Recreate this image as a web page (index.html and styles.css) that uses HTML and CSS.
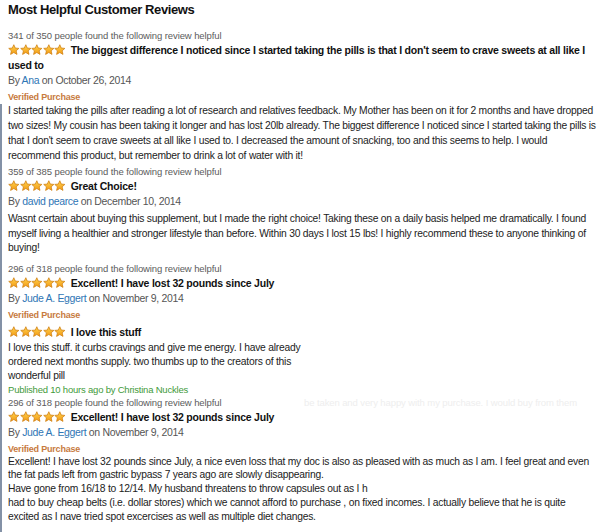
FILE: index.html
```html
<!DOCTYPE html>
<html lang="en">
<head>
    <meta charset="UTF-8">
    <title>Most Helpful Customer Reviews</title>
    <link rel="stylesheet" href="styles.css">
</head>
<body>
    <svg width="0" height="0" class="defs">
        <defs>
            <linearGradient id="starFill" x1="0" y1="0" x2="0" y2="1">
                <stop offset="0" stop-color="#ffd452"/>
                <stop offset="1" stop-color="#f39a12"/>
            </linearGradient>
            <symbol id="star" viewBox="0 0 24 24">
                <path d="M12 1.5l3.1 6.9 7.4.7-5.6 5 1.7 7.4L12 17.6l-6.6 3.9 1.7-7.4-5.6-5 7.4-.7z" fill="url(#starFill)" stroke="#cf7f12" stroke-width="1.6" stroke-linejoin="round"/>
            </symbol>
        </defs>
    </svg>

    <div class="reviews">
        <h2 class="heading">Most Helpful Customer Reviews</h2>

        <div class="review">
            <div class="helpful">341 of 350 people found the following review helpful</div>
            <div class="title">
                <span class="stars"><svg><use href="#star"/></svg><svg><use href="#star"/></svg><svg><use href="#star"/></svg><svg><use href="#star"/></svg><svg><use href="#star"/></svg></span>
                The biggest difference I noticed since I started taking the pills is that I don't seem to crave sweets at all like I used to
            </div>
            <div class="byline">By <a href="#">Ana</a> on October 26, 2014</div>
            <div class="verified">Verified Purchase</div>
            <p class="body first">I started taking the pills after reading a lot of research and relatives feedback. My Mother has been on it for 2 months and have dropped two sizes! My cousin has been taking it longer and has lost 20lb already. The biggest difference I noticed since I started taking the pills is that I don't seem to crave sweets at all like I used to. I decreased the amount of snacking, too and this seems to help. I would<br>recommend this product, but remember to drink a lot of water with it!</p>
        </div>

        <div class="review">
            <div class="helpful">359 of 385 people found the following review helpful</div>
            <div class="title">
                <span class="stars"><svg><use href="#star"/></svg><svg><use href="#star"/></svg><svg><use href="#star"/></svg><svg><use href="#star"/></svg><svg><use href="#star"/></svg></span>
                Great Choice!
            </div>
            <div class="byline">By <a href="#">david pearce</a> on December 10, 2014</div>
            <p class="body second">Wasnt certain about buying this supplement, but I made the right choice! Taking these on a daily basis helped me dramatically. I found myself living a healthier and stronger lifestyle than before. Within 30 days I lost 15 lbs! I highly recommend these to anyone thinking of buying!</p>
        </div>

        <div class="review">
            <div class="helpful">296 of 318 people found the following review helpful</div>
            <div class="title">
                <span class="stars"><svg><use href="#star"/></svg><svg><use href="#star"/></svg><svg><use href="#star"/></svg><svg><use href="#star"/></svg><svg><use href="#star"/></svg></span>
                Excellent! I have lost 32 pounds since July
            </div>
            <div class="byline">By <a href="#">Jude A. Eggert</a> on November 9, 2014</div>
            <div class="verified">Verified Purchase</div>
        </div>

        <div class="review">
            <div class="title short">
                <span class="stars"><svg><use href="#star"/></svg><svg><use href="#star"/></svg><svg><use href="#star"/></svg><svg><use href="#star"/></svg><svg><use href="#star"/></svg></span>
                I love this stuff
            </div>
            <p class="body narrow">I love this stuff. it curbs cravings and give me energy. I have already ordered next months supply. two thumbs up to the creators of this wonderful pill</p>
            <div class="published">Published 10 hours ago by Christina Nuckles</div>
        </div>

        <div class="review">
            <div class="helpful">296 of 318 people found the following review helpful <span class="ghost">be taken and very happy with my purchase. I would buy from them</span></div>
            <div class="title">
                <span class="stars"><svg><use href="#star"/></svg><svg><use href="#star"/></svg><svg><use href="#star"/></svg><svg><use href="#star"/></svg><svg><use href="#star"/></svg></span>
                Excellent! I have lost 32 pounds since July
            </div>
            <div class="byline">By <a href="#">Jude A. Eggert</a> on November 9, 2014</div>
            <div class="verified">Verified Purchase</div>
            <p class="body last">Excellent! I have lost 32 pounds since July, a nice even loss that my doc is also as pleased with as much as I am. I feel great and even<br>the fat pads left from gastric bypass 7 years ago are slowly disappearing.<br>Have gone from 16/18 to 12/14. My husband threatens to throw capsules out as I h<br>had to buy cheap belts (i.e. dollar stores) which we cannot afford to purchase , on fixed incomes. I actually believe that he is quite<br>excited as I nave tried spot excercises as well as multiple diet changes.</p>
        </div>
    </div>
</body>
</html>
```

FILE: styles.css
```css
body {
    margin: 0;
    background: #fff linear-gradient(#8391a6, #8391a6) no-repeat 0 104px / 2px 100%;
    font-family: "Liberation Sans", Arial, sans-serif;
    color: #222;
}
.defs {
    position: absolute;
}
.reviews {
    padding: 1px 8px 0 8px;
    width: 596px;
}
.heading {
    margin: 0 0 10px 0;
    font-size: 13px;
    letter-spacing: -0.4px;
    font-weight: bold;
    color: #111;
    line-height: 18px;
}
.helpful {
    font-size: 9.5px;
    letter-spacing: -0.1px;
    color: #5c5c5c;
    line-height: 13px;
    white-space: nowrap;
}
.ghost {
    color: #eeeeee;
    margin-left: 80px;
}
.title {
    padding-top: 1px;
    font-size: 10.5px;
    letter-spacing: -0.22px;
    font-weight: bold;
    color: #111;
    line-height: 15px;
}
.title.short {
    padding-top: 4px;
}
.stars {
    display: inline-flex;
    vertical-align: -2px;
    margin-right: 2px;
}
.stars svg {
    width: 11.6px;
    height: 11.6px;
}
.byline {
    font-size: 10.5px;
    letter-spacing: -0.34px;
    color: #555;
    line-height: 14px;
}
.byline a {
    color: #2f76b5;
    text-decoration: none;
}
.verified {
    margin-top: 4px;
    font-size: 9px;
    letter-spacing: -0.2px;
    font-weight: bold;
    color: #c77a3e;
    line-height: 12px;
}
.body {
    margin: 0;
    font-size: 10.3px;
    letter-spacing: -0.23px;
    line-height: 14px;
    color: #222;
}
.body.first {
    line-height: 15px;
    margin-bottom: 2px;
}
.body.second {
    line-height: 14.5px;
    margin: 4px 0 6px 0;
}
.body.narrow {
    width: 300px;
    margin-top: 1px;
}
.body.last {
    line-height: 13.8px;
}
.published {
    margin-top: 1px;
    font-size: 9.5px;
    letter-spacing: -0.21px;
    color: #3f9a3a;
    line-height: 12px;
}
```
